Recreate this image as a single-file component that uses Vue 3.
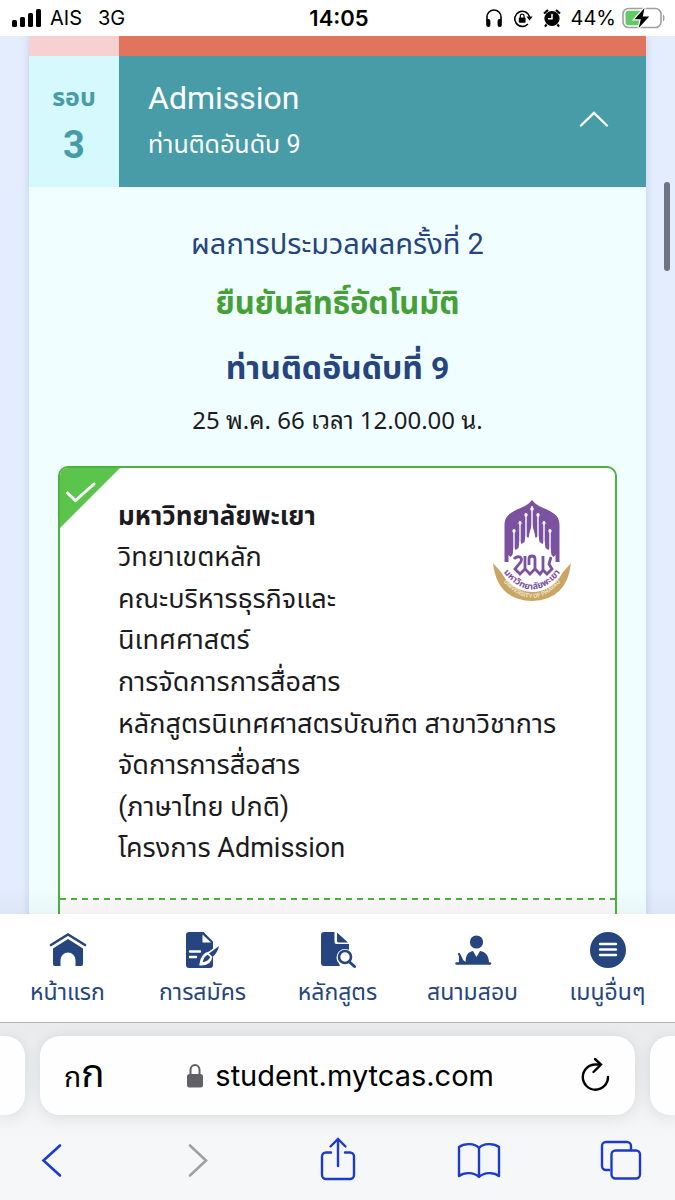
<script setup>
import { ref } from 'vue'

const open = ref(true)
const address = ref('student.mytcas.com')

const round = {
  label: 'รอบ',
  no: 3,
  title: 'Admission',
  sub: 'ท่านติดอันดับ 9'
}

const result = {
  title: 'ผลการประมวลผลครั้งที่ 2',
  status: 'ยืนยันสิทธิ์อัตโนมัติ',
  rank: 'ท่านติดอันดับที่ 9',
  time: '25 พ.ค. 66 เวลา 12.00.00 น.'
}

// campus, faculty, major, course, language + project
const groups = [
  ['วิทยาเขตหลัก'],
  ['คณะบริหารธุรกิจและ', 'นิเทศศาสตร์'],
  ['การจัดการการสื่อสาร'],
  ['หลักสูตรนิเทศศาสตรบัณฑิต สาขาวิชาการ', 'จัดการการสื่อสาร'],
  ['(ภาษาไทย ปกติ)', 'โครงการ Admission']
]

const menus = [
  { icon: 'home', text: 'หน้าแรก' },
  { icon: 'apply', text: 'การสมัคร' },
  { icon: 'course', text: 'หลักสูตร' },
  { icon: 'exam', text: 'สนามสอบ' },
  { icon: 'more', text: 'เมนูอื่นๆ' }
]
</script>

<template>
  <div class="phone">
    <header class="status-bar">
      <div class="carrier">
        <svg width="30" height="20" viewBox="0 0 30 20">
          <rect x="0" y="12" width="5" height="7" rx="1.5" />
          <rect x="8" y="9" width="5" height="10" rx="1.5" />
          <rect x="16" y="5" width="5" height="14" rx="1.5" />
          <rect x="24" y="1" width="5" height="18" rx="1.5" />
        </svg>
        <span class="operator">AIS</span>
        <span>3G</span>
      </div>
      <div class="clock">14:05</div>
      <div class="indicators">
        <svg width="18" height="20" viewBox="0 0 18 20">
          <path d="M2 13V9a7 7 0 0 1 14 0v4" fill="none" stroke="#000" stroke-width="1.6" />
          <rect x="1.2" y="11" width="4.2" height="8" rx="2" />
          <rect x="12.6" y="11" width="4.2" height="8" rx="2" />
        </svg>
        <svg width="20" height="20" viewBox="0 0 20 20">
          <path d="M14.9 16A7.6 7.6 0 1 1 16.7 9" fill="none" stroke="#000" stroke-width="1.6" />
          <path d="M13.4 8.6h6.200l-3 4z" />
          <rect x="5.8" y="9.5" width="6.8" height="5.2" rx="1" />
          <path d="M7.3 10V8.100a1.900 1.900 0 0 1 3.800 0V10" fill="none" stroke="#000" stroke-width="1.2" />
        </svg>
        <svg width="18" height="20" viewBox="0 0 18 20">
          <circle cx="9" cy="10.5" r="7.6" />
          <path d="M1 5.5 5 2M17 5.5 13 2M3.6 16.5 2 18.6M14.4 16.5l1.600 2.100" stroke="#000" stroke-width="2.2" fill="none" />
          <path d="M9 5.8v4.900H5" stroke="#fff" stroke-width="1.5" fill="none" />
        </svg>
        <span>44%</span>
        <svg class="battery" width="44" height="22" viewBox="0 0 44 22">
          <rect x="1" y="1.5" width="38" height="19" rx="5.5" fill="#fff" stroke="#a0a0a2" stroke-width="1.6" />
          <path d="M6.5 3.8H18.5V18.2H6.5A3 3 0 0 1 3.5 15.2V6.8A3 3 0 0 1 6.5 3.8z" fill="#63c966" />
          <path d="M41 7.5c2 .8 2 6.2 0 7z" fill="#a0a0a2" />
          <path d="M22.5 1 12.5 12.3h6.300L16.7 21 27.3 9.4h-6.500z" stroke="#fff" stroke-width="2.4" />
          <path d="M22.5 1 12.5 12.3h6.300L16.7 21 27.3 9.4h-6.500z" />
        </svg>
      </div>
    </header>

    <main class="page">
      <div class="sheet">
        <div class="prev-round"></div>
        <button class="round" :aria-expanded="open" @click="open = !open">
          <span class="round-no">
            <span class="round-label">{{ round.label }}</span>
            <span class="round-num">{{ round.no }}</span>
          </span>
          <span class="round-info">
            <span class="round-title">{{ round.title }}</span>
            <span class="round-sub">{{ round.sub }}</span>
          </span>
          <svg class="chevron" width="30" height="24" viewBox="0 0 30 24">
            <path d="M2 15.5 15 3l13 12.500" fill="none" stroke="#fff" stroke-width="2.4" stroke-linecap="round" />
          </svg>
        </button>

        <section v-if="open" class="result">
          <h2 class="result-title">{{ result.title }}</h2>
          <p class="result-status">{{ result.status }}</p>
          <p class="result-rank">{{ result.rank }}</p>
          <p class="result-time">{{ result.time }}</p>

          <article class="card">
            <svg class="tick" width="62" height="62" viewBox="0 0 62 62">
              <path d="M0 0H62L0 62z" fill="#5ac44c" />
              <path d="M8.5 26 16.5 33.5 35 17" fill="none" stroke="#fff" stroke-width="3" stroke-linecap="round" />
            </svg>
            <div class="card-body">
              <h3 class="uni">มหาวิทยาลัยพะเยา</h3>
              <div v-for="(g, i) in groups" :key="i" class="group">
                <p v-for="line in g" :key="line">{{ line }}</p>
              </div>
            </div>
            <svg class="uni-logo" width="80" height="104" viewBox="0 0 80 104">
              <defs>
                <path id="arcTh" d="M8 69Q40 112 72 69" />
                <path id="arcEn" d="M1 69Q40 129 79 69" />
              </defs>
              <path d="M40 1C45 8 54 9 61 14c5 3 6.500 7 6.500 13v36H12.5V27c0-6 1.500-10 6.500-13C26 9 35 8 40 1z" fill="#7a52a0" />
              <path d="M40 25l2.500 9 1 5 3-2 1 6 3 2 2-3 1 7 3 2 2-2 1 7 2 2 2-2V64h-47V56l2 2 2-2 1-7 2 2 3-2 1-7 2 3 3-2 1-6 3 2 1-5z" fill="#fff" />
              <g fill="#fff">
                <circle cx="40" cy="10" r="1.8" />
                <circle cx="34" cy="16" r="1.7" />
                <circle cx="46" cy="16" r="1.7" />
                <circle cx="28" cy="24" r="1.7" />
                <circle cx="52" cy="24" r="1.7" />
                <circle cx="22" cy="32" r="1.7" />
                <circle cx="58" cy="32" r="1.7" />
              </g>
              <path d="M40 7v24M34 14v26M46 14v26M28 22v25M52 22v25M22 30v25M58 30v25" stroke="#fff" stroke-width="1.4" />
              <g fill="none" stroke="#7a52a0" stroke-width="2.8">
                <path d="M22 60q2-3 6-2 3 2 0 6l-5 6 5 5 5-5V57" />
                <path d="M33 70l5 5 5-5V60q0-3-3-3t-3 3v6" />
                <path d="M43 70l5 5 3-4V57M51 71l4 4 5-5-3-5 2-7" />
              </g>
              <path d="M1 64 9 73Q20 93 40 93 60 93 71 73L79 64Q75 101 40 102 5 101 1 64z" fill="#c9a566" />
              <text class="logo-th"><textPath href="#arcTh" startOffset="50%">มหาวิทยาลัยพะเยา</textPath></text>
              <text class="logo-en"><textPath href="#arcEn" startOffset="50%">UNIVERSITY OF PHAYAO</textPath></text>
            </svg>
            <div class="card-foot"></div>
          </article>
        </section>
      </div>
      <div class="scroll-thumb"></div>
    </main>

    <nav class="menu">
      <a v-for="m in menus" :key="m.icon" href="#" class="menu-item">
        <svg width="40" height="40" viewBox="0 0 40 40">
          <g v-if="m.icon === 'home'">
            <path d="M3 16 20 5.5l17 10.500" fill="none" stroke="#26457f" stroke-width="2.6" stroke-linecap="round" />
            <path d="M20 10 35 19.5V35a2 2 0 0 1-2 2h-5.500v-6a7.500 7.500 0 0 0-15 0V37H7a2 2 0 0 1-2-2V19.5z" />
          </g>
          <g v-else-if="m.icon === 'apply'">
            <path d="M6 3h14.500L30 12.5V36a3 3 0 0 1-3 3H6a3 3 0 0 1-3-3V6a3 3 0 0 1 3-3z" />
            <path d="M19.5 5.5V13.5h8.500z" fill="#fff" />
            <path d="M7 22.5h10M7 28h6" stroke="#fff" stroke-width="2.4" stroke-linecap="round" />
            <path d="M35 18 26.5 24c-6 1-8 7-8.500 11 6 0 9.500-3 10-8z" stroke="#fff" stroke-width="3" fill="#fff" />
            <path d="M36 17 26 24.500l3.500 3.500q5-4 6.500-11z" />
            <path d="M25 25q-5 2-6 9 7-1 9-6z" fill="#26457f" stroke="#fff" stroke-width="1.2" />
          </g>
          <g v-else-if="m.icon === 'course'">
            <path d="M6 3h10.500v10a2 2 0 0 0 2 2H31v7a10 10 0 0 0-9 15H6a3 3 0 0 1-3-3V6a3 3 0 0 1 3-3z" />
            <path d="M19 3.5 30 13.5H20.5A1.500 1.500 0 0 1 19 12z" />
            <circle cx="27" cy="28.5" r="8.5" fill="#fff" />
            <circle cx="27" cy="28" r="6" fill="none" stroke="#26457f" stroke-width="2.6" />
            <path d="m31.5 33 5 4.500" stroke="#26457f" stroke-width="3" stroke-linecap="round" />
          </g>
          <g v-else-if="m.icon === 'exam'">
            <circle cx="23.5" cy="13" r="6.6" />
            <path d="M12.5 34.5c0-8 2-11.500 7.500-12.500l3.500 6 3.500-6c6 1 9 5 9 12.500z" />
            <path d="M3.5 34.5h33.500" stroke="#26457f" stroke-width="2.4" stroke-linecap="round" />
            <path d="M6 25 10 33M7 34v-4l5 4z" stroke="#26457f" stroke-width="2.2" stroke-linecap="round" />
          </g>
          <g v-else>
            <circle cx="20" cy="21" r="18" />
            <path d="M12 15h16M12 20.5h16M12 26h16" stroke="#fff" stroke-width="2.4" stroke-linecap="round" />
          </g>
        </svg>
        <span>{{ m.text }}</span>
      </a>
    </nav>

    <footer class="browser">
      <div class="tabs">
        <div class="tab tab-left"></div>
        <div class="tab tab-main">
          <button class="reader">ก<span>ก</span></button>
          <label class="address">
            <svg width="18" height="26" viewBox="0 0 18 26">
              <rect x="1" y="11" width="16" height="13.5" rx="2.5" fill="#606066" />
              <path d="M4.5 12V7a4.500 5 0 0 1 9 0v5" fill="none" stroke="#606066" stroke-width="2" />
            </svg>
            <input v-model="address" type="text" />
          </label>
          <button class="icon-btn">
            <svg width="32" height="36" viewBox="0 0 32 36">
              <path d="M20 6.5H16.5A12.600 12.600 0 1 0 29 19" fill="none" stroke="#000" stroke-width="2.4" stroke-linecap="round" />
              <path d="m16 1 6 5.500-7.500 7.500" fill="none" stroke="#000" stroke-width="2.4" stroke-linecap="round" />
            </svg>
          </button>
        </div>
        <div class="tab tab-right"></div>
      </div>
      <div class="tools">
        <button class="icon-btn">
          <svg width="44" height="48" viewBox="0 0 44 48">
            <path d="M28 9.5 11.5 24.5 28 39.5" fill="none" stroke="#1d3bcb" stroke-width="2.6" stroke-linecap="round" />
          </svg>
        </button>
        <button class="icon-btn" disabled>
          <svg width="44" height="48" viewBox="0 0 44 48">
            <path d="M16 9.5 32 24.5 16 39.5" fill="none" stroke="#a0a0a2" stroke-width="2.6" stroke-linecap="round" />
          </svg>
        </button>
        <button class="icon-btn">
          <svg width="44" height="48" viewBox="0 0 44 48">
            <path d="M15 16.5h-5a4 4 0 0 0-4 4v18.500a4 4 0 0 0 4 4h24a4 4 0 0 0 4-4v-18.500a4 4 0 0 0-4-4h-5M22 30V4M14.5 10.5 22 3l7.500 7.500" fill="none" stroke="#1d3bcb" stroke-width="2.4" stroke-linecap="round" />
          </svg>
        </button>
        <button class="icon-btn">
          <svg width="44" height="48" viewBox="0 0 44 48">
            <path d="M22 41V12c-4-5-15-5-20-1v29c5-4 15-4 20 1 5-5 15-5 20-1V11c-5-4-16-4-20 1" fill="none" stroke="#1d3bcb" stroke-width="2.4" stroke-linejoin="round" />
          </svg>
        </button>
        <button class="icon-btn">
          <svg width="44" height="48" viewBox="0 0 44 48">
            <path d="M11 34H7a4 4 0 0 1-4-4V10a4 4 0 0 1 4-4h21a4 4 0 0 1 4 4v4" fill="none" stroke="#1d3bcb" stroke-width="2.4" />
            <rect x="12.5" y="14.5" width="28.5" height="28" rx="4" fill="none" stroke="#1d3bcb" stroke-width="2.4" />
          </svg>
        </button>
      </div>
    </footer>
  </div>
</template>

<style>
body {
  margin: 0;
}
</style>

<style scoped>
.phone {
  display: flex;
  flex-direction: column;
  height: 100vh;
  overflow: hidden;
  background: #e4edfd;
  font-family: Roboto, "Noto Sans Thai", "Liberation Sans", sans-serif;
  color: #1b1b21;
}
h2, h3, p {
  margin: 0;
  font-weight: 400;
}
button {
  padding: 0;
  border: 0;
  background: none;
  font: inherit;
  color: inherit;
}
svg {
  display: block;
  flex: none;
}

/* status bar */
.status-bar {
  display: grid;
  grid-template-columns: 1fr auto 1fr;
  align-items: center;
  height: 36px;
  flex: none;
  padding: 0 9px 0 12px;
  background: #fff;
  color: #000;
  font-family: Inter, sans-serif;
  font-size: 20px;
}
.carrier {
  display: flex;
  align-items: center;
}
.operator {
  margin: 0 16px 0 8px;
}
.clock {
  font-weight: 600;
  font-size: 22px;
}
.indicators {
  display: flex;
  align-items: center;
  justify-content: flex-end;
  gap: 10px;
}
.battery {
  margin-left: -4px;
}

/* page */
.page {
  position: relative;
  flex: 1;
  min-height: 0;
  overflow: hidden;
  padding: 0 29px;
}
.page::after {
  content: "";
  position: absolute;
  left: 0;
  right: 0;
  bottom: 0;
  height: 28px;
  background: linear-gradient(rgba(0, 0, 0, 0), rgba(0, 0, 0, 0.03));
}
.sheet {
  min-height: 100%;
  background: #f0feff;
  box-shadow: 0 0 8px rgba(60, 90, 150, 0.2);
}
.prev-round {
  height: 20px;
  background: linear-gradient(to right, #f7d0d2 90px, #e1745d 90px);
}
.round {
  display: flex;
  align-items: center;
  width: 100%;
  height: 131px;
  background: #479ca8;
  color: #fff;
  text-align: left;
}
.round-no {
  display: flex;
  flex-direction: column;
  align-items: center;
  justify-content: center;
  width: 90px;
  height: 100%;
  background: #d5f9fd;
  color: #479ca8;
  font-weight: 700;
}
.round-label {
  font-size: 25px;
  line-height: 46px;
}
.round-num {
  font-size: 38px;
  line-height: 48px;
}
.round-info {
  display: flex;
  flex-direction: column;
  flex: 1;
  padding-left: 29px;
}
.round-title {
  font-size: 32px;
  line-height: 46px;
}
.round-sub {
  font-size: 25px;
  line-height: 48px;
}
.chevron {
  margin-right: 37px;
}
.result {
  padding: 29px 29px 0;
  text-align: center;
  color: #26457f;
}
.result-title {
  font-size: 29px;
  line-height: 56px;
}
.result-status {
  font-size: 31px;
  line-height: 64px;
  font-weight: 700;
  color: #45a135;
}
.result-rank {
  font-size: 32px;
  line-height: 64px;
  font-weight: 700;
}
.result-time {
  margin-bottom: 26px;
  font-family: "Noto Sans", "Noto Sans Thai Looped", Loma, "Noto Sans Thai", sans-serif;
  font-size: 24px;
  line-height: 40px;
  color: #1b1b21;
}

/* card */
.card {
  position: relative;
  overflow: hidden;
  border: 2px solid #4cb33d;
  border-radius: 10px;
  background: #fff;
  text-align: left;
  color: #1b1b21;
}
.tick {
  position: absolute;
  top: -1px;
  left: -1px;
}
.card-body {
  padding: 28px 0 29px 58px;
  font-size: 27px;
  line-height: 41px;
  white-space: nowrap;
}
.uni {
  font-size: 26px;
  font-weight: 700;
}
.group + .group {
  margin-top: 1px;
}
.uni-logo {
  position: absolute;
  top: 31px;
  right: 43px;
}
.logo-th {
  font-size: 9px;
  font-weight: 700;
  fill: #7a52a0;
  text-anchor: middle;
}
.logo-en {
  font-size: 6px;
  font-weight: 700;
  fill: #f1e3c4;
  text-anchor: middle;
}
.card-foot {
  height: 120px;
  background:
    repeating-linear-gradient(to right, #4cb33d 0 6px, transparent 6px 11px) top / 100% 2px no-repeat,
    #fbf9fa;
}
.scroll-thumb {
  position: absolute;
  top: 146px;
  right: 5px;
  width: 6px;
  height: 89px;
  border-radius: 3px;
  background: #6f7480;
}

/* bottom menu */
.menu {
  display: grid;
  grid-template-columns: repeat(5, 1fr);
  flex: none;
  height: 108px;
  background: #fff;
}
.menu-item {
  display: flex;
  flex-direction: column;
  align-items: center;
  padding-top: 15px;
  color: #26457f;
  fill: #26457f;
  font-size: 23px;
  line-height: 48px;
  text-decoration: none;
  white-space: nowrap;
}

/* browser bars */
.browser {
  flex: none;
  height: 164px;
  padding-top: 13px;
  border-top: 1px solid #b4b5b8;
  background: linear-gradient(#eaebed, #f6f7f8 70%);
}
.tabs {
  display: flex;
  gap: 15px;
  height: 79px;
}
.tab {
  width: 25px;
  background: #fefefe;
  box-shadow: 0 2px 16px rgba(0, 0, 0, 0.1);
}
.tab-left {
  border-radius: 0 20px 20px 0;
}
.tab-right {
  border-radius: 20px 0 0 20px;
}
.tab-main {
  display: flex;
  align-items: center;
  justify-content: space-between;
  flex: 1;
  padding: 0 24px;
  border-radius: 20px;
  color: #000;
}
.reader {
  padding-bottom: 12px;
  font-family: "Noto Sans Thai Looped", Loma, "Noto Sans Thai", sans-serif;
  font-size: 28px;
}
.reader span {
  font-size: 38px;
}
.address {
  display: flex;
  align-items: center;
  gap: 11px;
}
.address input {
  width: 282px;
  padding: 0;
  border: 0;
  outline: 0;
  background: none;
  font-family: Inter, sans-serif;
  font-size: 29px;
}
.tools {
  display: flex;
  justify-content: space-between;
  padding: 21px 32px 0;
}
</style>
